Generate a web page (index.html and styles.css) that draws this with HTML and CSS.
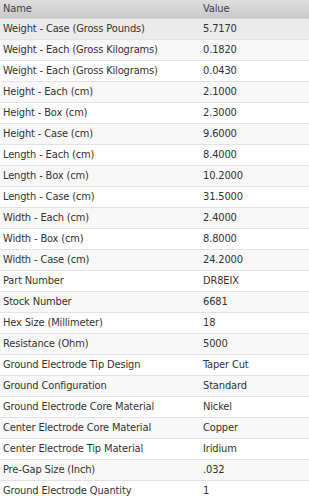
FILE: index.html
```html
<!DOCTYPE html>
<html>
<head>
<meta charset="utf-8">
<link rel="stylesheet" href="styles.css">
</head>
<body>
<table class="grid">
  <thead>
    <tr><th class="c-name">Name</th><th class="c-value">Value</th></tr>
  </thead>
  <tbody>
    <tr class="sel"><td>Weight - Case (Gross Pounds)</td><td>5.7170</td></tr>
    <tr><td>Weight - Each (Gross Kilograms)</td><td>0.1820</td></tr>
    <tr><td>Weight - Each (Gross Kilograms)</td><td>0.0430</td></tr>
    <tr><td>Height - Each (cm)</td><td>2.1000</td></tr>
    <tr><td>Height - Box (cm)</td><td>2.3000</td></tr>
    <tr><td>Height - Case (cm)</td><td>9.6000</td></tr>
    <tr><td>Length - Each (cm)</td><td>8.4000</td></tr>
    <tr><td>Length - Box (cm)</td><td>10.2000</td></tr>
    <tr><td>Length - Case (cm)</td><td>31.5000</td></tr>
    <tr><td>Width - Each (cm)</td><td>2.4000</td></tr>
    <tr><td>Width - Box (cm)</td><td>8.8000</td></tr>
    <tr><td>Width - Case (cm)</td><td>24.2000</td></tr>
    <tr><td>Part Number</td><td>DR8EIX</td></tr>
    <tr><td>Stock Number</td><td>6681</td></tr>
    <tr><td>Hex Size (Millimeter)</td><td>18</td></tr>
    <tr><td>Resistance (Ohm)</td><td>5000</td></tr>
    <tr><td>Ground Electrode Tip Design</td><td>Taper Cut</td></tr>
    <tr><td>Ground Configuration</td><td>Standard</td></tr>
    <tr><td>Ground Electrode Core Material</td><td>Nickel</td></tr>
    <tr><td>Center Electrode Core Material</td><td>Copper</td></tr>
    <tr><td>Center Electrode Tip Material</td><td>Iridium</td></tr>
    <tr><td>Pre-Gap Size (Inch)</td><td>.032</td></tr>
    <tr><td>Ground Electrode Quantity</td><td>1</td></tr>
  </tbody>
</table>
</body>
</html>
```
FILE: styles.css
```css
html, body {
  margin: 0;
  padding: 0;
  background: #ffffff;
}
.grid {
  width: 309px;
  border-collapse: collapse;
  table-layout: fixed;
  font-family: "DejaVu Sans Condensed", "Liberation Sans", Arial, sans-serif;
  font-size: 11px;
  letter-spacing: -0.15px;
  color: #333333;
}
.grid th {
  height: 18px;
  padding: 0 0 1px 3px;
  text-align: left;
  font-weight: normal;
  color: #404040;
  background: linear-gradient(#dedede, #c9c9c9);
  border-bottom: 1px solid #d4d4d4;
  box-sizing: border-box;
  vertical-align: middle;
}
.grid .c-name { width: 203px; }
.grid .c-value { padding-left: 0; }
.grid td {
  height: 21px;
  box-sizing: border-box;
  padding: 0 0 0 3px;
  border-top: 1px solid #e2e2e2;
  white-space: nowrap;
  vertical-align: middle;
  background: #ffffff;
}
.grid td + td { padding-left: 0; }
.grid tbody tr:nth-child(even) td { background: #f8f8f8; }
.grid tbody tr.sel td { background: #ebebeb; border-top: none; }
```
